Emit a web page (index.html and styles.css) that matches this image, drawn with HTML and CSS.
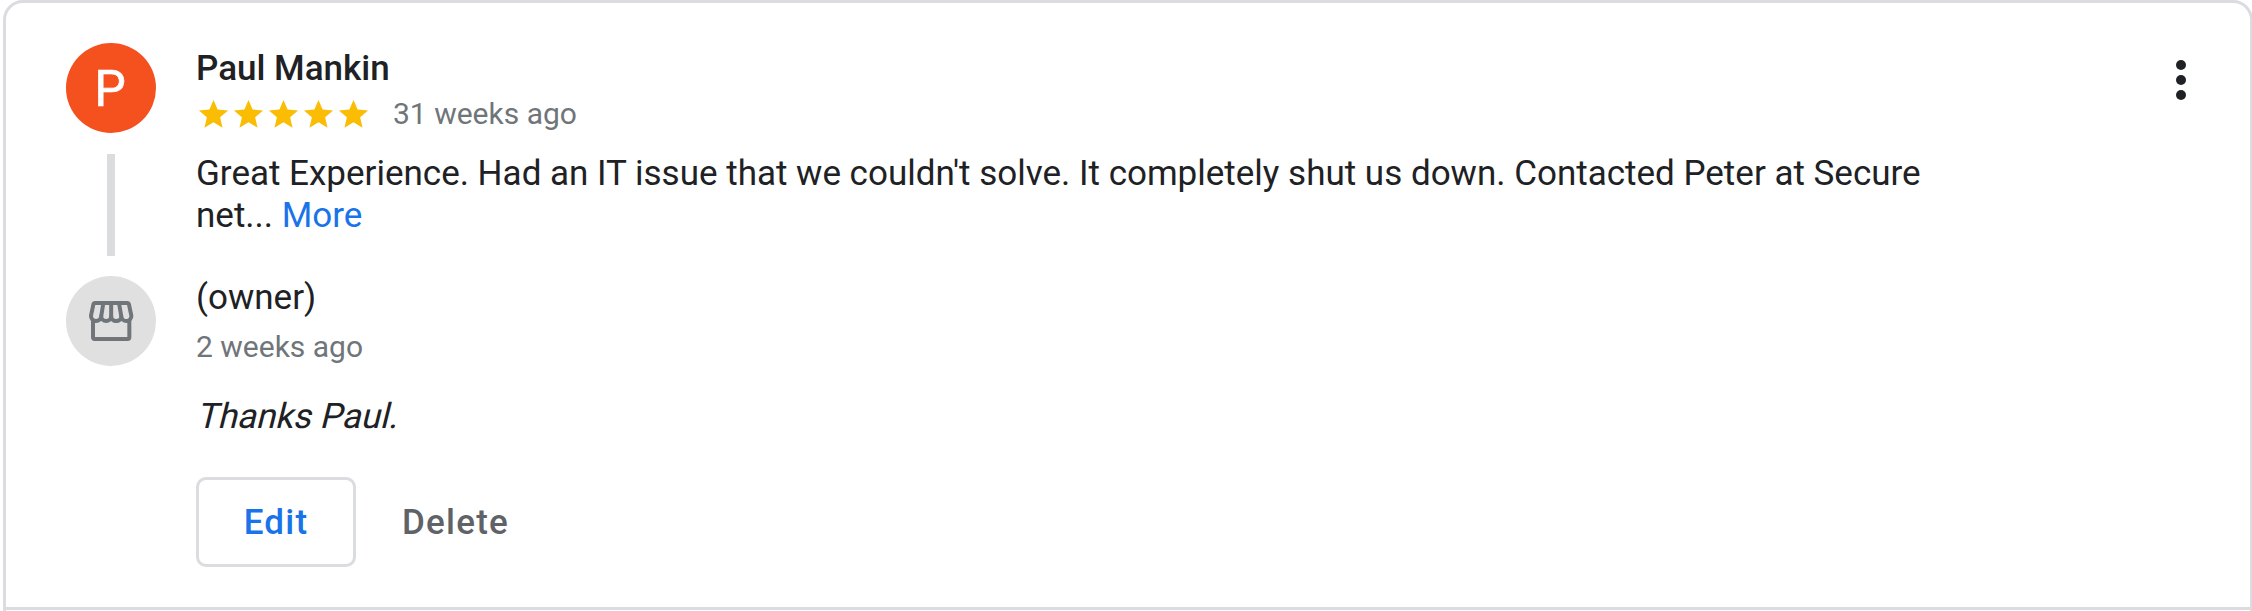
FILE: index.html
```html
<!DOCTYPE html>
<html lang="en">
<head>
<meta charset="utf-8">
<title>Review</title>
<link rel="stylesheet" href="styles.css">
</head>
<body>
<svg class="sprite" aria-hidden="true">
  <symbol id="star" viewBox="0 0 24 24"><path d="M12 17.27L18.18 21l-1.64-7.03L22 9.24l-7.19-.61L12 2 9.19 8.63 2 9.24l5.46 4.73L5.82 21z"/></symbol>
</svg>
<main class="card">
  <article class="review">
    <div class="rail">
      <div class="avatar avatar-user">P</div>
      <div class="connector"></div>
      <div class="avatar avatar-owner">
        <svg class="store" viewBox="3 3 180 180">
          <path d="M39 88V142a5 5 0 0 0 5 5H143a5 5 0 0 0 5-5V88"/>
          <path d="M46 39H141Q146 39 147 44L154 77A15 15 0 0 1 124 79A15 14 0 0 1 93.5 79A15 14 0 0 1 63.500 79A15 15 0 0 1 33 77L40 44Q41 39 46 39Z"/>
          <path d="M70 39L63.500 80M93.500 39V80M117 39L124 80"/>
        </svg>
      </div>
    </div>
    <div class="content">
      <h1 class="name">Paul Mankin</h1>
      <div class="rating">
        <div class="stars">
          <svg class="star"><use href="#star"/></svg>
          <svg class="star"><use href="#star"/></svg>
          <svg class="star"><use href="#star"/></svg>
          <svg class="star"><use href="#star"/></svg>
          <svg class="star"><use href="#star"/></svg>
        </div>
        <span class="time">31 weeks ago</span>
      </div>
      <p class="text">Great Experience. Had an IT issue that we couldn't solve. It completely shut us down. Contacted Peter at Secure<br>net... <a class="more">More</a></p>
      <div class="owner">(owner)</div>
      <div class="time">2 weeks ago</div>
      <p class="text reply">Thanks Paul.</p>
      <div class="actions">
        <button class="button edit">Edit</button>
        <button class="button delete">Delete</button>
      </div>
    </div>
    <svg class="menu" viewBox="0 0 24 24"><circle cx="12" cy="6" r="2"/><circle cx="12" cy="12" r="2"/><circle cx="12" cy="18" r="2"/></svg>
  </article>
</main>
</body>
</html>
```
FILE: styles.css
```css
* { box-sizing: border-box; }
body {
  margin: 0;
  height: 611px;
  overflow: hidden;
  background: #fff;
  color: #202124;
  font-family: Roboto, sans-serif;
  font-size: 35px;
  line-height: 42px;
}
.sprite { display: none; }
.card {
  width: 2250px;
  height: 640px;
  margin-left: 3px;
  border: 3px solid #dadce0;
  border-radius: 20px;
}
.review {
  display: flex;
  height: 607px;
  padding: 40px 39px 0 60px;
  border-bottom: 3px solid #dadce0;
}
.rail {
  display: flex;
  flex-direction: column;
  align-items: center;
  width: 90px;
  margin-right: 40px;
}
.avatar {
  display: flex;
  align-items: center;
  justify-content: center;
  width: 90px;
  height: 90px;
  border-radius: 50%;
}
.avatar-user {
  padding: 2px 2px 0 0;
  background: #f4511e;
  color: #fff;
  font-size: 50px;
  -webkit-text-stroke: 0.6px #fff;
}
.avatar-owner { background: #e0e0e0; }
.store {
  width: 60px;
  height: 60px;
  fill: none;
  stroke: #70757a;
  stroke-width: 12;
  stroke-linejoin: round;
}
.connector { width: 8px; height: 102px; margin: 21px 0 20px; background: #dadce0; }
.content { flex: 1; padding-top: 5px; }
.name { margin: 0 0 6px; font-size: 35px; font-weight: 500; }
.rating { display: flex; height: 36px; margin-bottom: 21px; }
.stars { display: flex; padding-top: 1px; margin-right: 22px; }
.star { width: 35px; height: 35px; fill: #fbbc04; }
.time { font-size: 30px; line-height: 36px; color: #70757a; }
.text { margin: 0; }
.more { color: #1a73e8; }
.owner { margin: 40px 0 10px; }
.reply {
  margin-top: 31px;
  transform: skewX(-14deg);
  transform-origin: 0 33px;
}
.actions { display: flex; margin-top: 39px; }
.button {
  height: 90px;
  padding: 2px 0 0;
  border: 3px solid transparent;
  border-radius: 10px;
  background: none;
  font: 500 35px/42px Roboto, sans-serif;
  letter-spacing: 1.2px;
}
.edit { width: 160px; border-color: #dadce0; color: #1a73e8; }
.delete { width: 199px; color: #5f6368; }
.menu { width: 60px; height: 60px; margin-top: 7px; fill: #202124; }
```
